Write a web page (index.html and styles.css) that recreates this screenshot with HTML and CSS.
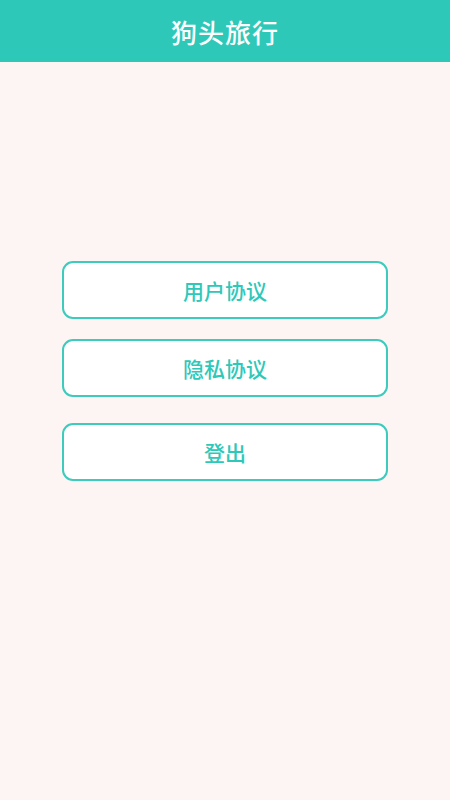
FILE: index.html
```html
<!DOCTYPE html>
<html lang="zh">
<head>
<meta charset="utf-8">
<link rel="stylesheet" href="styles.css">
</head>
<body>
<header class="topbar"><h1 class="title">狗头旅行</h1></header>
<main class="content">
  <div class="btn">用户协议</div>
  <div class="btn">隐私协议</div>
  <div class="btn btn-logout">登出</div>
</main>
</body>
</html>
```
FILE: styles.css
```css
html, body {
  margin: 0;
  padding: 0;
  height: 100%;
}
body {
  background: #fdf5f3;
  font-family: "Noto Sans CJK SC", "Noto Sans", sans-serif;
}
.topbar {
  height: 62px;
  background: #2ec8b9;
  display: flex;
  align-items: center;
  justify-content: center;
}
.title {
  margin: 0;
  color: #ffffff;
  font-size: 26px;
  font-weight: 500;
  letter-spacing: 1px;
}
.content {
  display: flex;
  flex-direction: column;
  align-items: center;
  padding-top: 199px;
}
.btn {
  box-sizing: border-box;
  width: 326px;
  height: 58px;
  border: 2px solid #3ccbbd;
  border-radius: 11px;
  background: #ffffff;
  color: #2ec8b9;
  font-size: 21px;
  font-weight: 500;
  display: flex;
  align-items: center;
  justify-content: center;
  margin-bottom: 20px;
}
.btn-logout {
  margin-top: 6px;
}
```
